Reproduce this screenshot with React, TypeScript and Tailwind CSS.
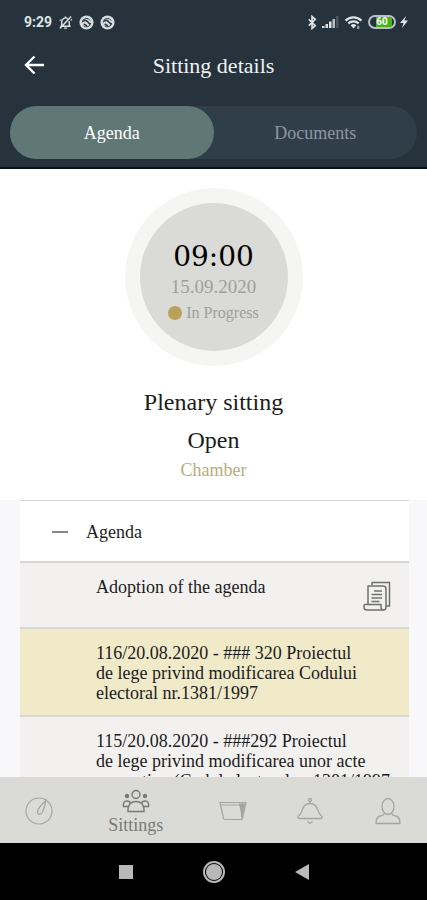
import React, { useState } from "react";

interface AgendaItem {
  id: string;
  lines: string[];
  highlighted?: boolean;
  hasDocuments?: boolean;
}

const AGENDA: AgendaItem[] = [
  { id: "adoption", lines: ["Adoption of the agenda"], hasDocuments: true },
  {
    id: "116",
    lines: ["116/20.08.2020 - ### 320 Proiectul", "de lege privind modificarea Codului", "electoral nr.1381/1997"],
    highlighted: true,
  },
  {
    id: "115",
    lines: ["115/20.08.2020 - ###292 Proiectul", "de lege privind modificarea unor acte", "normative (Codul electoral nr.1381/1997"],
  },
];

function MutedBell() {
  return (
    <svg viewBox="0 0 16 16" className="h-[15px] w-[15px]" fill="none" stroke="currentColor" strokeWidth="1.5">
      <path d="M4 11.5V7a4 4 0 0 1 6.5-3M12 6.5v5M2.5 12h11M6.5 14h3M2 14.5 14 1.5M8 1.5v1.5M2 5l1 1M13.5 5.5l1.5-.5" />
    </svg>
  );
}

function ChatBadge() {
  return (
    <svg viewBox="0 0 16 16" className="h-[15px] w-[15px]" fill="none">
      <circle cx="8" cy="8" r="7.5" fill="#d9dcde" />
      <path d="M3.500 8a4.500 4.500 0 0 1 8.500-2M12.500 8.500a4.500 4.500 0 0 1-7.500 3" stroke="#26333d" strokeWidth="1" />
      <path d="M4.500 7c2-2 3.500-1.500 5 .5l2.500 2.500M5 9.500l3.500 2" stroke="#26333d" strokeWidth="1.600" />
    </svg>
  );
}

function StatusBar() {
  return (
    <div className="flex h-10 items-center justify-between pl-6 pr-[18px] pt-1 font-['Roboto',sans-serif] text-[#dfe3e6]">
      <div className="flex items-center gap-1.5">
        <span className="text-sm font-bold leading-4">9:29</span>
        <MutedBell />
        <ChatBadge />
        <ChatBadge />
      </div>
      <div className="flex items-center gap-[3px]">
        <svg viewBox="0 0 12 16" className="h-[15px] w-[11px]" fill="none" stroke="currentColor" strokeWidth="1.8">
          <path d="m2 4.500 7 7-3.500 3V1.500L9 4.500l-7 7" />
        </svg>
        <svg viewBox="0 0 18 14" className="h-3.5 w-[18px]" fill="currentColor">
          <path d="M1 11h2.500v2H1zM4.500 9H7v4H4.500zM8 6.500h2.500V13H8z" />
          <path d="M11.500 4H14v9h-2.500z" opacity=".8" />
          <path d="M15 1h2.500v12H15z" opacity=".2" />
        </svg>
        <svg viewBox="0 0 20 16" className="ml-0.5 h-[15px] w-[19px]" fill="none" stroke="currentColor" strokeWidth="2.4">
          <path d="M1.500 6a12 12 0 0 1 17 0M4.500 9a8 8 0 0 1 11 0" />
          <path d="m10 14.500-3-3.500a4.500 4.500 0 0 1 6 0z" fill="currentColor" stroke="none" />
          <path d="M15 11.500v3.500" opacity=".6" />
        </svg>
        <div className="relative ml-0.5 flex h-3.5 w-7 items-center justify-center overflow-hidden rounded-full border-2 border-[#b9bfc4] bg-[#26333d]">
          <div className="absolute inset-y-0 left-1.5 right-0.5 bg-[#43b516]" />
          <span className="relative text-[10px] font-bold leading-none text-white">60</span>
        </div>
        <svg viewBox="0 0 10 14" className="h-3.5 w-2.5" fill="currentColor">
          <path d="M7 1 1 8h3.500L3 13l6-7.500H5.500z" />
        </svg>
      </div>
    </div>
  );
}

function DocumentsIcon() {
  return (
    <svg viewBox="0 0 28 30" className="h-[30px] w-7" fill="none" stroke="#6f7170" strokeWidth="1.5" strokeLinejoin="round">
      <path d="M9 4V1.500h17.500V25H23" />
      <path d="M5 23V5h15q3 0 3 3v18q0 3-2.500 3T18 26v-2.500H2Q1 23.500 1 25v1.500Q1 29 4 29h17" />
      <path d="M11 10h8M8.500 13.500H19M8.500 17H19M8.500 20.500h8" />
    </svg>
  );
}

function SittingsIcon() {
  return (
    <svg viewBox="0 0 28 24" className="h-6 w-7" fill="none" stroke="currentColor" strokeWidth="1.4">
      <circle cx="14" cy="5.500" r="4" />
      <circle cx="5" cy="7" r="1.500" fill="currentColor" />
      <circle cx="23" cy="7" r="1.500" fill="currentColor" />
      <path d="M6 22.500V20c0-4 3-7.500 8-7.500s8 3.500 8 7.500v2.500z" />
      <path d="M6 17.500H1.500c-.8-3 .5-5.500 3.500-5.500 2 0 3.200 1 3.700 2.500M22 17.500h4.500c.8-3-.5-5.500-3.500-5.500-2 0-3.200 1-3.700 2.500" />
    </svg>
  );
}

function NavButton({ label, children }: { label: string; children: React.ReactNode }) {
  return (
    <button type="button" aria-label={label} className="flex flex-1 items-center justify-center pt-0.5 text-[#a5a6a3]">
      {children}
    </button>
  );
}

function BottomNav() {
  return (
    <nav className="flex h-[66px] shrink-0 items-stretch bg-[#dadad6]">
      <NavButton label="Dashboard">
        <svg viewBox="0 0 28 28" className="h-7 w-7" fill="none" stroke="currentColor" strokeWidth="1.2">
          <circle cx="14" cy="14" r="13" />
          <path d="M21 3.500c-3 3-8.500 7.500-8.500 11.500 0 3 3.500 3 5 0 1.200-2.500 2.500-7 3.500-11.500z" />
        </svg>
      </NavButton>
      <button type="button" className="flex w-[116px] flex-col items-center justify-center pt-1.5 text-lg leading-6 text-[#777a78]">
        <SittingsIcon />
        Sittings
      </button>
      <NavButton label="Folders">
        <svg viewBox="0 0 28 20" className="h-5 w-7" fill="none" stroke="currentColor" strokeWidth="1.2">
          <path d="M1 1.500h26l-3.500 16q-.3 1-1.500 1H6q-1.200 0-1.500-1L1 1.500zM2 4h18q1.500 0 1.800 1.500L23 18" />
          <path d="M20.500 3h5l-2 12z" fill="currentColor" />
        </svg>
      </NavButton>
      <NavButton label="Notifications">
        <svg viewBox="0 0 26 28" className="h-7 w-[26px]" fill="none" stroke="currentColor" strokeWidth="1.3">
          <path d="M2 21.500c-1.500 0-1.500-2 0-3C6.500 15 4.500 6.500 13 6.500S19.500 15 24 18.500c1.500 1 1.500 3 0 3z" />
          <path d="M10.500 24.500 13 26.500l2.500-2" />
          <circle cx="13" cy="3" r="1.500" />
          <path d="M13 4.500v2" />
        </svg>
      </NavButton>
      <NavButton label="Profile">
        <svg viewBox="0 0 26 28" className="h-7 w-[26px]" fill="none" stroke="currentColor" strokeWidth="1.3">
          <ellipse cx="13" cy="9.500" rx="6" ry="8" />
          <path d="M9.500 16.500c-1 2-2.500 2-4.500 2.500-3 .8-4 3-4 7.500h24c0-4.500-1-6.700-4-7.500-2-.5-3.500-.5-4.500-2.500" />
        </svg>
      </NavButton>
    </nav>
  );
}

function SystemNav() {
  return (
    <div className="flex h-[57px] shrink-0 items-center justify-center gap-[65px] bg-black text-[#b8b8b8]">
      <button type="button" aria-label="Recent apps" className="flex w-6 justify-center">
        <span className="h-3.5 w-3.5 bg-current" />
      </button>
      <button type="button" aria-label="Home" className="flex h-[22px] w-[22px] items-center justify-center rounded-full border-2 border-current">
        <span className="h-4 w-4 rounded-full bg-current" />
      </button>
      <button type="button" aria-label="Back" className="flex w-6 justify-center">
        <svg viewBox="0 0 14 16" className="h-4 w-3.5" fill="currentColor">
          <path d="M14 0v16L0 8z" />
        </svg>
      </button>
    </div>
  );
}

export default function App() {
  const [tab, setTab] = useState("agenda");
  const [open, setOpen] = useState(true);

  const tabClass = (name: string) =>
    `flex-1 rounded-full text-lg ${tab === name ? "bg-[#5f7875] text-white" : "text-[#8d96a3]"}`;

  return (
    <div className="flex h-screen flex-col bg-[#f8f8fb] font-['Liberation_Serif',serif] text-[#1c1c1c]">
      <header className="shrink-0 border-b-2 border-[#0b141b] bg-[#26333d]">
        <StatusBar />
        <div className="grid h-[50px] grid-cols-[68px_1fr_68px] items-center">
          <button type="button" aria-label="Back" className="flex justify-center text-white">
            <svg viewBox="0 0 20 20" className="h-5 w-5" fill="none" stroke="currentColor" strokeWidth="2.4">
              <path d="M20 10H2M10.500 1.500 2 10l8.500 8.500" />
            </svg>
          </button>
          <h1 className="text-center text-[22px] text-[#eef1f3]">Sitting details</h1>
        </div>
        <div className="mx-2.5 mb-2 mt-4 flex h-[53px] rounded-full bg-[#303e49]">
          <button type="button" onClick={() => setTab("agenda")} className={tabClass("agenda")}>
            Agenda
          </button>
          <button type="button" onClick={() => setTab("documents")} className={tabClass("documents")}>
            Documents
          </button>
        </div>
      </header>

      <main className="min-h-0 flex-1 overflow-hidden">
        <section className="flex flex-col items-center bg-white pb-[17px] pt-[19px]">
          <div className="rounded-full bg-[#f5f5f4] p-[15px]">
            <div className="flex h-[148px] w-[148px] flex-col items-center justify-center rounded-full bg-[#dadad6] pt-3 text-[#a0a09d]">
              <time className="font-['DejaVu_Serif',serif] text-[28px] leading-9 text-black">09:00</time>
              <span className="text-[19px] leading-6">15.09.2020</span>
              <span className="flex items-center gap-1 text-base leading-7">
                <span className="h-3.5 w-3.5 rounded-full bg-[#b9a15c]" />
                In Progress
              </span>
            </div>
          </div>
          <h2 className="mt-4 text-2xl leading-10">Plenary sitting</h2>
          <p className="text-2xl leading-9">Open</p>
          <p className="text-lg leading-[25px] text-[#b9ae78]">Chamber</p>
        </section>

        <section className="ml-5 mr-[18px] border-t border-[#d6d6d4]">
          <button
            type="button"
            aria-expanded={open}
            onClick={() => setOpen(!open)}
            className="flex h-[62px] w-full items-center gap-[18px] border-b-2 border-[#d6d6d4] bg-white pl-8 pt-0.5 text-lg"
          >
            <span className="h-0.5 w-4 bg-[#858585]" />
            Agenda
          </button>
          {open && (
            <ul>
              {AGENDA.map((item) => (
                <li
                  key={item.id}
                  className={`flex justify-between border-b-2 border-[#d6d6d4] pb-3 pl-[76px] pr-[18px] pt-3.5 text-lg leading-5 ${
                    item.highlighted ? "bg-[#f0eac8]" : "bg-[#f2f1f0]"
                  }`}
                >
                  <p className="whitespace-nowrap">
                    {item.lines.map((line) => (
                      <span key={line} className="block">
                        {line}
                      </span>
                    ))}
                  </p>
                  {item.hasDocuments && (
                    <button type="button" aria-label="Documents" className="mb-1 mt-1">
                      <DocumentsIcon />
                    </button>
                  )}
                </li>
              ))}
            </ul>
          )}
        </section>
      </main>

      <BottomNav />
      <SystemNav />
    </div>
  );
}
